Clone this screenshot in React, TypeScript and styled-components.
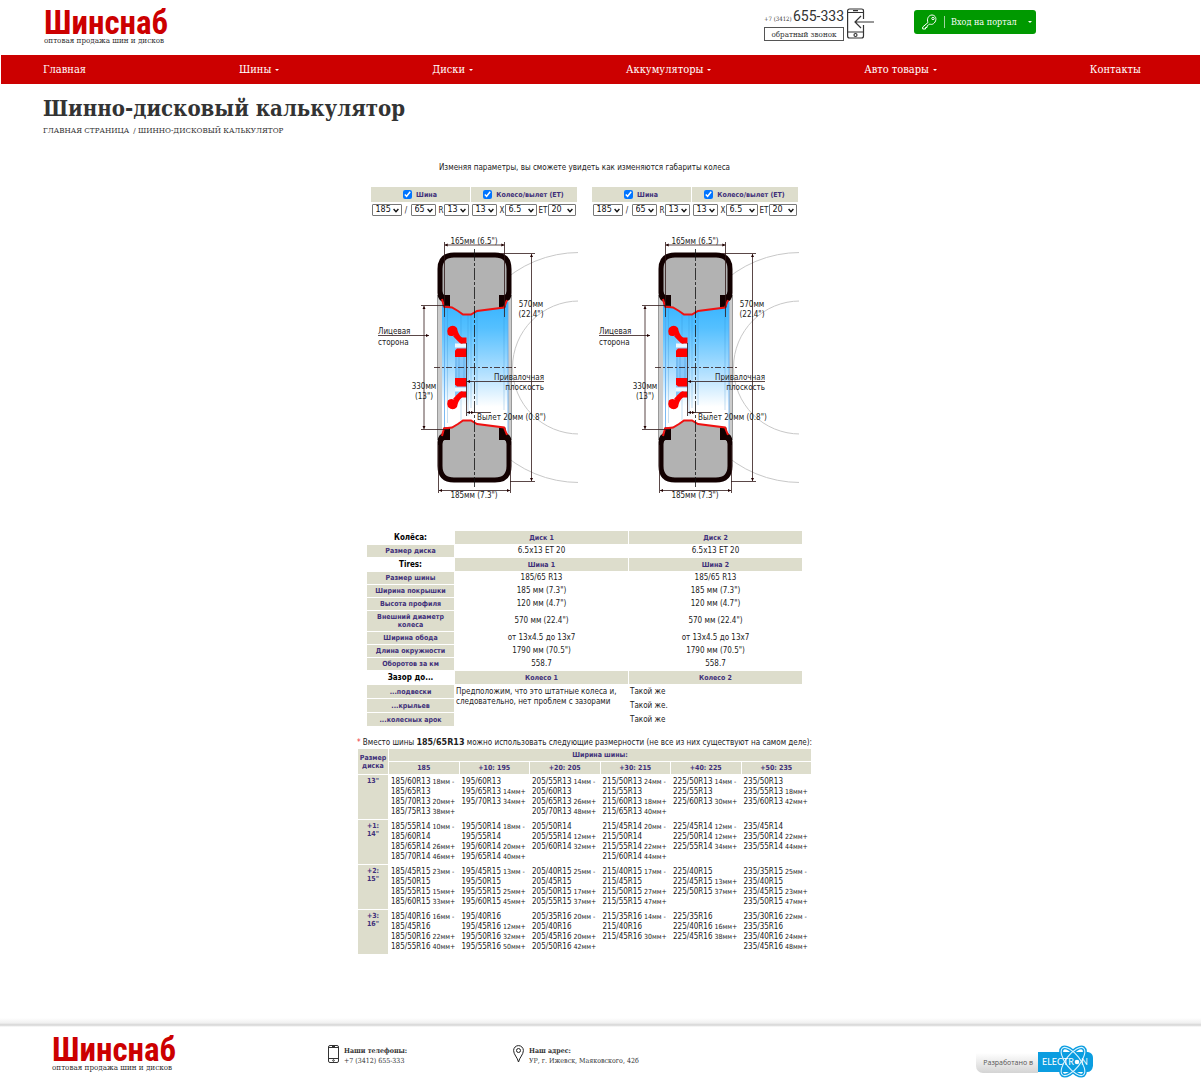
import React from "react";
import styled, { createGlobalStyle } from "styled-components";

const slab = `"Roboto Slab", "DejaVu Serif Condensed", "DejaVu Serif", serif`;
const sans = `"DejaVu Sans Condensed", "DejaVu Sans", sans-serif`;
const wideSans = `"DejaVu Sans", sans-serif`;
const beige = "#ddddcc";
const violet = "#40307a";
const red = "#cc0000";

const GlobalStyle = createGlobalStyle`
  * { box-sizing: border-box; }
  body { margin: 0; background: #fff; color: #333; font-family: ${sans}; font-size: 8px; }
  a { color: inherit; text-decoration: none; }
  button { font: inherit; color: inherit; cursor: pointer; }
`;

const Page = styled.div`
  min-height: 100vh;
  display: flex;
  flex-direction: column;
`;

const Header = styled.header`
  display: flex;
  align-items: flex-start;
  height: 55px;
  padding: 8px 165px 0 44px;
`;

const LogoLink = styled.a`
  display: flex;
  flex-direction: column;
  width: 126px;
  white-space: nowrap;
`;

const LogoName = styled.span`
  color: ${red};
  font: bold 33px/29px "Liberation Sans Narrow", "Roboto Condensed", Roboto, sans-serif;
`;

const LogoTagline = styled.span`
  font: 8px/8px ${slab};
`;

const PhoneBlock = styled.div`
  display: flex;
  gap: 3px;
  margin-left: auto;
  margin-right: 40px;
`;

const PhoneColumn = styled.div`
  display: flex;
  flex-direction: column;
  width: 80px;
`;

const PhoneNumber = styled.a`
  display: flex;
  align-items: baseline;
  justify-content: space-between;
  font: 14px/16px Roboto, sans-serif;
  white-space: nowrap;
`;

const PhoneCode = styled.span`
  font: 6px/16px ${slab};
`;

const CallbackButton = styled.button`
  height: 14px;
  padding: 0;
  border: 1px solid #555;
  background: #fff;
  font: 8px/11px ${slab};
  white-space: nowrap;
`;

const PortalButton = styled.button`
  display: flex;
  align-items: center;
  width: 122px;
  height: 24px;
  margin-top: 2px;
  padding: 0 4px 0 8px;
  border: 0;
  border-radius: 3px;
  background: #009900;
  color: #fff;
  font: 9px/12px ${slab};
  white-space: nowrap;
`;

const PortalLabel = styled.span`
  flex: 1;
  margin-left: 7px;
  padding-left: 6px;
  border-left: 1px solid #9fd49f;
  text-align: left;
`;

const Caret = styled.span`
  display: inline-block;
  margin-left: 4px;
  border: 2px solid transparent;
  border-top-color: currentColor;
  border-bottom: 0;
  vertical-align: middle;
`;

const Nav = styled.nav`
  display: flex;
  align-items: center;
  justify-content: space-between;
  height: 29px;
  margin: 0 1px;
  padding: 0 59px 0 42px;
  background: ${red};
  color: #fff;
  font: 11px/14px ${slab};
`;

const TitleArea = styled.div`
  padding: 10px 43px 0;
`;

const Title = styled.h1`
  margin: 0;
  font: bold 22px/28px ${slab};
`;

const Breadcrumbs = styled.nav`
  display: flex;
  gap: 4px;
  margin-top: 4px;
  font: 8px/10px ${slab};
  text-transform: uppercase;
`;

const Main = styled.main`
  flex: 1;
  display: flex;
  flex-direction: column;
  align-items: center;
  padding: 26px 32px 0 0;
  color: #222;
`;

const Intro = styled.p`
  margin: 0 0 14px;
  line-height: 11px;
`;

const Wheels = styled.div`
  display: flex;
  gap: 14px;
  margin-bottom: 25px;
`;

const WheelPanel = styled.section`
  width: 207px;
`;

const ParamGrid = styled.div`
  display: grid;
  grid-template-columns: 99px 106px;
  gap: 2px 1px;
`;

const ParamHeading = styled.label`
  display: flex;
  align-items: center;
  justify-content: center;
  gap: 4px;
  height: 15px;
  background: ${beige};
  color: ${violet};
  font-size: 7px;
  font-weight: bold;
  white-space: nowrap;
`;

const CheckBox = styled.input`
  width: 9px;
  height: 9px;
  margin: 0;
`;

const ParamGroup = styled.div`
  display: flex;
  align-items: center;
  padding: 0 1px;
`;

const Separator = styled.span<{ $width: number; $align?: string }>`
  width: ${(p) => p.$width}px;
  text-align: ${(p) => p.$align || "center"};
  white-space: nowrap;
`;

const SelectBox = styled.span<{ $width: number }>`
  display: grid;
  align-items: center;
  width: ${(p) => p.$width}px;
  & > * { grid-area: 1 / 1; }
  & > svg { justify-self: end; margin-right: 3px; pointer-events: none; }
`;

const SelectField = styled.select`
  appearance: none;
  width: 100%;
  height: 12px;
  padding: 0 0 0 3px;
  border: 1px solid #777;
  border-radius: 1px;
  background: #fff;
  color: #111;
  font: 8px/10px ${wideSans};
`;

const Drawing = styled.svg`
  display: block;
  width: 207px;
  height: 275px;
  margin-top: 14px;
  font-family: ${sans};
  font-size: 8px;
`;

const CompareTable = styled.table`
  width: 437px;
  margin-bottom: 10px;
  border-spacing: 1px;
  table-layout: fixed;
  line-height: 10px;
`;

const CompareRow = styled.tr<{ $height: number }>`
  height: ${(p) => p.$height}px;
`;

const HeadCell = styled.th`
  padding: 0 2px;
  background: ${beige};
  color: ${violet};
  font-size: 7px;
  line-height: 8px;
`;

const SectionCell = styled.th`
  padding: 0;
  color: #000;
  font-size: 8px;
  line-height: 10px;
`;

const ValueCell = styled.td<{ $left?: boolean }>`
  padding: ${(p) => (p.$left ? 2 : 0)}px 1px 0;
  text-align: ${(p) => (p.$left ? "left" : "center")};
  vertical-align: ${(p) => (p.$left ? "top" : "middle")};
`;

const Note = styled.p`
  margin: 0;
  line-height: 11px;
  white-space: nowrap;
  & > b { font-family: ${wideSans}; }
`;

const Star = styled.span`
  color: #e33;
`;

const SizeTable = styled.table`
  width: 455px;
  border-spacing: 1px;
  table-layout: fixed;
`;

const SizeHead = styled(HeadCell)`
  height: 12px;
  padding: 0;
`;

const RimCell = styled(HeadCell)`
  height: 44px;
  padding: 2px 6px;
  vertical-align: top;
`;

const SizeCell = styled.td`
  padding: 2px 0 0 2px;
  vertical-align: top;
  line-height: 10px;
  white-space: nowrap;
`;

const SizeLine = styled.div``;

const Delta = styled.small`
  font-size: 7px;
`;

const Footer = styled.footer`
  display: grid;
  grid-template-columns: 276px 185px 1fr auto;
  align-items: start;
  height: 64px;
  padding: 17px 108px 0 52px;
  background: linear-gradient(#fff, #f0f0f0 5px, #d4d4d4 7px, #fff 9px);
`;

const Contact = styled.address`
  display: flex;
  gap: 5px;
  margin-top: 10px;
  font: 7px/11px ${slab};
`;

const ContactText = styled.div`
  display: flex;
  flex-direction: column;
  white-space: nowrap;
`;

const Badge = styled.a`
  display: flex;
  align-items: center;
  margin-top: 9px;
`;

const BadgeText = styled.span`
  height: 20px;
  margin-top: 3px;
  padding: 0 5px 0 7px;
  border-radius: 0 0 0 7px;
  background: linear-gradient(#fff, #d4d4d4);
  color: #555;
  font: 7px/19px "Open Sans", sans-serif;
`;

const sizes: Record<string, string[]> = {
  width: ["175", "185", "195", "205"],
  profile: ["60", "65", "70"],
  rim: ["13", "14", "15", "16"],
  rimWidth: ["5.5", "6", "6.5", "7"],
  offset: ["15", "20", "25"],
};

function Picker({ name, kind, value, width }: { name: string; kind: string; value: string; width: number }) {
  return (
    <SelectBox $width={width}>
      <SelectField aria-label={name} defaultValue={value}>
        {sizes[kind].map((s) => <option key={s}>{s}</option>)}
      </SelectField>
      <svg width="6" height="5" viewBox="0 0 6 5">
        <path d="M.6 1 3 3.600 5.400 1" fill="none" stroke="#111" strokeWidth="1.4" />
      </svg>
    </SelectBox>
  );
}

function Logo() {
  return (
    <LogoLink href="#">
      <LogoName>Шинснаб</LogoName>
      <LogoTagline>оптовая продажа шин и дисков</LogoTagline>
    </LogoLink>
  );
}

function TireHalf() {
  return (
    <g>
      <path d="M71 70Q69 68 69 64V39Q69 24 84 24H123Q138 24 138 39V64Q138 68 136 70L134 77 106 81 100 85H92L81 78 73 77Z" fill="#b2b2b2" />
      <path d="M77.500 66.500V76H74.500V71Q68 70 68 63V39Q68 24 83 24H124Q139 24 139 39V63Q139 70 133 71V76H129.500V66.500H134Q137 65 137 61V39Q137 26 124 26H83Q70 26 70 39V61Q70 65 73 66.500Z" fill="#120000" stroke="#120000" strokeWidth="3" />
      <path d="M71 69 73 76.500 81 77.500 87 81 92 84.500H100L106 81 133 77.500 136 70" fill="none" stroke="#f01010" strokeWidth="2" />
      <path d="M77 98Q82 93.500 86 98Q87 104 90.500 107.500H95.500V113.500H90Q87 112.500 85 106.500L83 105.500Q79 107 76.800 104.500Q75.500 101 77 98Z" fill="#f00" />
      <path d="M86 104 91.500 108V113.500H90Q86 111 82 106Z" fill="#f00" />
      <path d="M86 118.500H95.500V127H84V120.500Z" fill="#f00" />
    </g>
  );
}

function WheelDrawing({ id }: { id: string }) {
  const g = `air-${id}`;
  const e = `end-${id}`;
  return (
    <Drawing viewBox="0 0 207 275" role="img" aria-label="Сечение колеса">
      <defs>
        <linearGradient id={g} x1="0" y1="0" x2="0" y2="1">
          <stop offset="0" stopColor="#36b4ff" />
          <stop offset=".2" stopColor="#55c0ff" />
          <stop offset=".55" stopColor="#b4e1ff" />
          <stop offset=".8" stopColor="#fff" />
        </linearGradient>
        <marker id={e} viewBox="0 0 4 4" refX="4" refY="2" markerWidth="4" markerHeight="4" orient="auto-start-reverse">
          <path d="M0 0 4 2 0 4Z" fill="#200" />
        </marker>
      </defs>
      <g fill="none" stroke="#c8c8c8">
        <circle cx="208" cy="137.500" r="115" />
        <circle cx="208" cy="137.500" r="66.500" />
      </g>
      <rect x="66" y="65" width="75" height="145" fill="#ccc" />
      <path d="M66.500 65V210M140.500 65V210" stroke="#999" />
      <rect x="71" y="72" width="66" height="131" fill={`url(#${g})`} />
      <g stroke="#2a86cc" strokeWidth=".6" opacity=".45">
        <path d="M76.500 78V193M90 84V190M97 84V186M100 84V178M106 80V175M133 78V180" />
      </g>
      <path d="M73.500 78V199M137 72V203" stroke="#5aa7ef" strokeWidth=".8" />
      <rect x="84" y="109" width="11" height="57" fill="#86c8fa" />
      <path d="M84 115.500H95M84 159.500H95" stroke="#eef8ff" strokeWidth="4" />
      <path d="M85 127V148M88 127V148M93 127V148" stroke="#5aa7e0" strokeWidth=".7" />
      <TireHalf />
      <g transform="matrix(1 0 0 -1 0 275)"><TireHalf /></g>
      <g stroke="#301818" strokeWidth=".8" fill="none">
        <path d="M103.500 19V257" stroke="#111" strokeDasharray="12 2 3 2" />
        <path d="M63 137.500H146" strokeDasharray="6 2 2 2" />
        <path d="M73.500 12V87M133.500 12V87M95.500 113V186M129 23.500H164M139 251.500H164M50 75.500H78M50 199.500H78M67.500 215V263M139.500 215V263M103 182.500H120" />
        <path d="M73.500 15H133.500" markerStart={`url(#${e})`} markerEnd={`url(#${e})`} />
        <path d="M160.500 24V251" markerStart={`url(#${e})`} markerEnd={`url(#${e})`} />
        <path d="M53 76V199" markerStart={`url(#${e})`} markerEnd={`url(#${e})`} />
        <path d="M68 260.500H139" markerStart={`url(#${e})`} markerEnd={`url(#${e})`} />
        <path d="M7 105.500H58" markerEnd={`url(#${e})`} />
        <path d="M173 151.500H96" markerEnd={`url(#${e})`} />
        <path d="M96 182.500H103" markerStart={`url(#${e})`} markerEnd={`url(#${e})`} />
      </g>
      <g fill="#222">
        <g textAnchor="middle">
          <text x="103" y="14">165мм (6.5")</text>
          <text x="160" y="77">570мм</text>
          <text x="160" y="87">(22.4")</text>
          <text x="53" y="159">330мм</text>
          <text x="53" y="169">(13")</text>
          <text x="103" y="268">185мм (7.3")</text>
        </g>
        <text x="7" y="104">Лицевая</text>
        <text x="7" y="115">сторона</text>
        <text x="173" y="150" textAnchor="end">Привалочная</text>
        <text x="173" y="160" textAnchor="end">плоскость</text>
        <text x="106" y="190">Вылет 20мм (0.8")</text>
      </g>
    </Drawing>
  );
}

function Wheel({ id }: { id: string }) {
  return (
    <WheelPanel>
      <ParamGrid>
        <ParamHeading><CheckBox type="checkbox" defaultChecked />Шина</ParamHeading>
        <ParamHeading><CheckBox type="checkbox" defaultChecked />Колесо/вылет (ET)</ParamHeading>
        <ParamGroup>
          <Picker name="Ширина шины" kind="width" value="185" width={30} />
          <Separator $width={9}>/</Separator>
          <Picker name="Профиль" kind="profile" value="65" width={25} />
          <Separator $width={8} $align="right">R</Separator>
          <Picker name="Диаметр шины" kind="rim" value="13" width={25} />
        </ParamGroup>
        <ParamGroup>
          <Picker name="Диаметр диска" kind="rim" value="13" width={25} />
          <Separator $width={8} $align="right">X</Separator>
          <Picker name="Ширина диска" kind="rimWidth" value="6.5" width={32} />
          <Separator $width={11} $align="right">ET</Separator>
          <Picker name="Вылет" kind="offset" value="20" width={28} />
        </ParamGroup>
      </ParamGrid>
      <WheelDrawing id={id} />
    </WheelPanel>
  );
}

type Row = { label: string; value?: string; heads?: string[]; height?: number };
const compareRows: Row[] = [
  { label: "Колёса:", heads: ["Диск 1", "Диск 2"] },
  { label: "Размер диска", value: "6.5x13 ET 20" },
  { label: "Tires:", heads: ["Шина 1", "Шина 2"] },
  { label: "Размер шины", value: "185/65 R13" },
  { label: "Ширина покрышки", value: "185 мм (7.3\")" },
  { label: "Высота профиля", value: "120 мм (4.7\")" },
  { label: "Внешний диаметр колеса", value: "570 мм (22.4\")", height: 20 },
  { label: "Ширина обода", value: "от 13x4.5 до 13x7" },
  { label: "Длина окружности", value: "1790 мм (70.5\")" },
  { label: "Оборотов за км", value: "558.7" },
  { label: "Зазор до...", heads: ["Колесо 1", "Колесо 2"] },
];

const widthHeads = ["185", "+10: 195", "+20: 205", "+30: 215", "+40: 225", "+50: 235"];

// Each entry is "profile:difference"; the difference is left out for the nearest fit.
const sizeRows = [
  { rim: "13", label: "13\"", cells: ["60:18-,65,70:20+,75:38+", "60,65:14+,70:34+", "55:14-,60,65:26+,70:48+", "50:24-,55,60:18+,65:40+", "50:14-,55,60:30+", "50,55:18+,60:42+"] },
  { rim: "14", label: "+1: 14\"", cells: ["55:10-,60,65:26+,70:46+", "50:18-,55,60:20+,65:40+", "50,55:12+,60:32+", "45:20-,50,55:22+,60:44+", "45:12-,50:12+,55:34+", "45,50:22+,55:44+"] },
  { rim: "15", label: "+2: 15\"", cells: ["45:23-,50,55:15+,60:33+", "45:13-,50,55:25+,60:45+", "40:25-,45,50:17+,55:37+", "40:17-,45,50:27+,55:47+", "40,45:13+,50:37+", "35:25-,40,45:23+,50:47+"] },
  { rim: "16", label: "+3: 16\"", cells: ["40:16-,45,50:22+,55:40+", "40,45:12+,50:32+,55:50+", "35:20-,40,45:20+,50:42+", "35:14-,40,45:30+", "35,40:16+,45:38+", "30:22-,35,40:24+,45:48+"] },
];

function SizeEntry({ width, rim, entry }: { width: number; rim: string; entry: string }) {
  const [profile, diff] = entry.split(":");
  return (
    <SizeLine>
      {width}/{profile}R{rim}
      {diff && <Delta> {diff.slice(0, 2)}мм{diff[2] === "-" ? " -" : "+"}</Delta>}
    </SizeLine>
  );
}

function PhoneIcon() {
  return (
    <svg width="27" height="31" viewBox="0 0 27 31" fill="none" stroke="#333" strokeWidth="1.200">
      <path d="M16.500 11V3Q16.500 1 14.500 1H2.500Q.6 1 .6 3V28Q.6 30 2.500 30H14.500Q16.500 30 16.500 28V17M.6 4.500H16.500M.6 24H16.500M6 2.700H11M27 14H8M14 8 8 14 14 20" />
      <circle cx="8.500" cy="27" r="1.500" />
    </svg>
  );
}

export default function App() {
  return (
    <Page>
      <GlobalStyle />
      <Header>
        <Logo />
        <PhoneBlock>
          <PhoneColumn>
            <PhoneNumber href="tel:+73412655333"><PhoneCode>+7 (3412)</PhoneCode>655-333</PhoneNumber>
            <CallbackButton>обратный звонок</CallbackButton>
          </PhoneColumn>
          <PhoneIcon />
        </PhoneBlock>
        <PortalButton>
          <svg width="15" height="16" viewBox="0 0 15 16" fill="none" stroke="#fff" strokeWidth="1">
            <path d="M6 8.500C4.500 5 6.500 1 10 1S15 5 13 8 9 10.500 7.500 10L6 11.500 5 12V13.500H3.500V15H.7V13Z" />
            <circle cx="11" cy="4.500" r="1.200" />
          </svg>
          <PortalLabel>Вход на портал</PortalLabel>
          <Caret />
        </PortalButton>
      </Header>
      <Nav>
        <a href="#">Главная</a>
        <a href="#">Шины<Caret /></a>
        <a href="#">Диски<Caret /></a>
        <a href="#">Аккумуляторы<Caret /></a>
        <a href="#">Авто товары<Caret /></a>
        <a href="#">Контакты</a>
      </Nav>
      <TitleArea>
        <Title>Шинно-дисковый калькулятор</Title>
        <Breadcrumbs>
          <a href="#">Главная страница</a>
          <span>/ Шинно-дисковый калькулятор</span>
        </Breadcrumbs>
      </TitleArea>
      <Main>
        <Intro>Изменяя параметры, вы сможете увидеть как изменяются габариты колеса</Intro>
        <Wheels>
          <Wheel id="first" />
          <Wheel id="second" />
        </Wheels>
        <CompareTable>
          <colgroup><col width="87" /><col /><col /></colgroup>
          <tbody>
            {compareRows.map((r) => (
              <CompareRow key={r.label} $height={r.height || (r.heads ? 13 : 12)}>
                {r.heads ? <SectionCell>{r.label}</SectionCell> : <HeadCell scope="row">{r.label}</HeadCell>}
                {r.heads
                  ? r.heads.map((h) => <HeadCell key={h}>{h}</HeadCell>)
                  : [1, 2].map((n) => <ValueCell key={n}>{r.value}</ValueCell>)}
              </CompareRow>
            ))}
            <CompareRow $height={13}>
              <HeadCell scope="row">...подвески</HeadCell>
              <ValueCell $left rowSpan={3}>Предположим, что это штатные колеса и, следовательно, нет проблем с зазорами</ValueCell>
              <ValueCell $left>Такой же</ValueCell>
            </CompareRow>
            <CompareRow $height={13}>
              <HeadCell scope="row">...крыльев</HeadCell>
              <ValueCell $left>Такой же.</ValueCell>
            </CompareRow>
            <CompareRow $height={13}>
              <HeadCell scope="row">...колесных арок</HeadCell>
              <ValueCell $left>Такой же</ValueCell>
            </CompareRow>
          </tbody>
        </CompareTable>
        <Note><Star>*</Star> Вместо шины <b>185/65R13</b> можно использовать следующие размерности (не все из них существуют на самом деле):</Note>
        <SizeTable>
          <colgroup><col width="30" /><col /><col /><col /><col /><col /><col /></colgroup>
          <thead>
            <tr><SizeHead rowSpan={2}>Размер диска</SizeHead><SizeHead colSpan={6}>Ширина шины:</SizeHead></tr>
            <tr>{widthHeads.map((w) => <SizeHead key={w}>{w}</SizeHead>)}</tr>
          </thead>
          <tbody>
            {sizeRows.map((row) => (
              <tr key={row.rim}>
                <RimCell scope="row">{row.label}</RimCell>
                {row.cells.map((cell, i) => (
                  <SizeCell key={i}>
                    {cell.split(",").map((entry) => (
                      <SizeEntry key={entry} width={185 + i * 10} rim={row.rim} entry={entry} />
                    ))}
                  </SizeCell>
                ))}
              </tr>
            ))}
          </tbody>
        </SizeTable>
      </Main>
      <Footer>
        <Logo />
        <Contact>
          <svg width="11" height="18" viewBox="0 0 11 18" fill="none" stroke="#333">
            <rect x=".5" y=".5" width="10" height="17" rx="1.500" />
            <path d="M.5 2.500H10.500M.5 13.500H10.500M4 1.500H7" />
            <circle cx="5.500" cy="15.500" r=".8" />
          </svg>
          <ContactText><b>Наши телефоны:</b><a href="tel:+73412655333">+7 (3412) 655-333</a></ContactText>
        </Contact>
        <Contact>
          <svg width="11" height="18" viewBox="0 0 11 18" fill="none" stroke="#222">
            <path d="M5.500 17C4.500 12.500.6 9.500.6 5.500A4.900 4.900 0 0 1 10.400 5.500C10.400 9.500 6.500 12.500 5.500 17Z" />
            <circle cx="5.500" cy="5.500" r="2" />
          </svg>
          <ContactText><b>Наш адрес:</b><span>УР, г. Ижевск, Маяковского, 42б</span></ContactText>
        </Contact>
        <Badge href="#">
          <BadgeText>Разработано в</BadgeText>
          <svg width="55" height="34" viewBox="0 0 55 34" role="img" aria-label="Electron">
            <path d="M0 8H50Q55 9 55 14V22Q54 28 49 28H0Z" fill="#0b9de0" />
            <g fill="none" stroke="#0b9de0" strokeWidth="4">
              <ellipse cx="35" cy="17.500" rx="17" ry="7" transform="rotate(52 35 17.500)" />
              <ellipse cx="35" cy="17.500" rx="17" ry="7" transform="rotate(128 35 17.500)" />
            </g>
            <g fill="none" stroke="#d9f3ff" strokeWidth="1.100">
              <ellipse cx="35" cy="17.500" rx="17" ry="7" transform="rotate(52 35 17.500)" />
              <ellipse cx="35" cy="17.500" rx="17" ry="7" transform="rotate(128 35 17.500)" />
            </g>
            <circle cx="39" cy="18" r="2.300" fill="#fff" />
            <g fill="#fff" fontFamily="Lato, sans-serif" fontSize="9">
              <text x="4" y="21">ELECTR</text>
              <text x="43" y="21">N</text>
            </g>
          </svg>
        </Badge>
      </Footer>
    </Page>
  );
}
